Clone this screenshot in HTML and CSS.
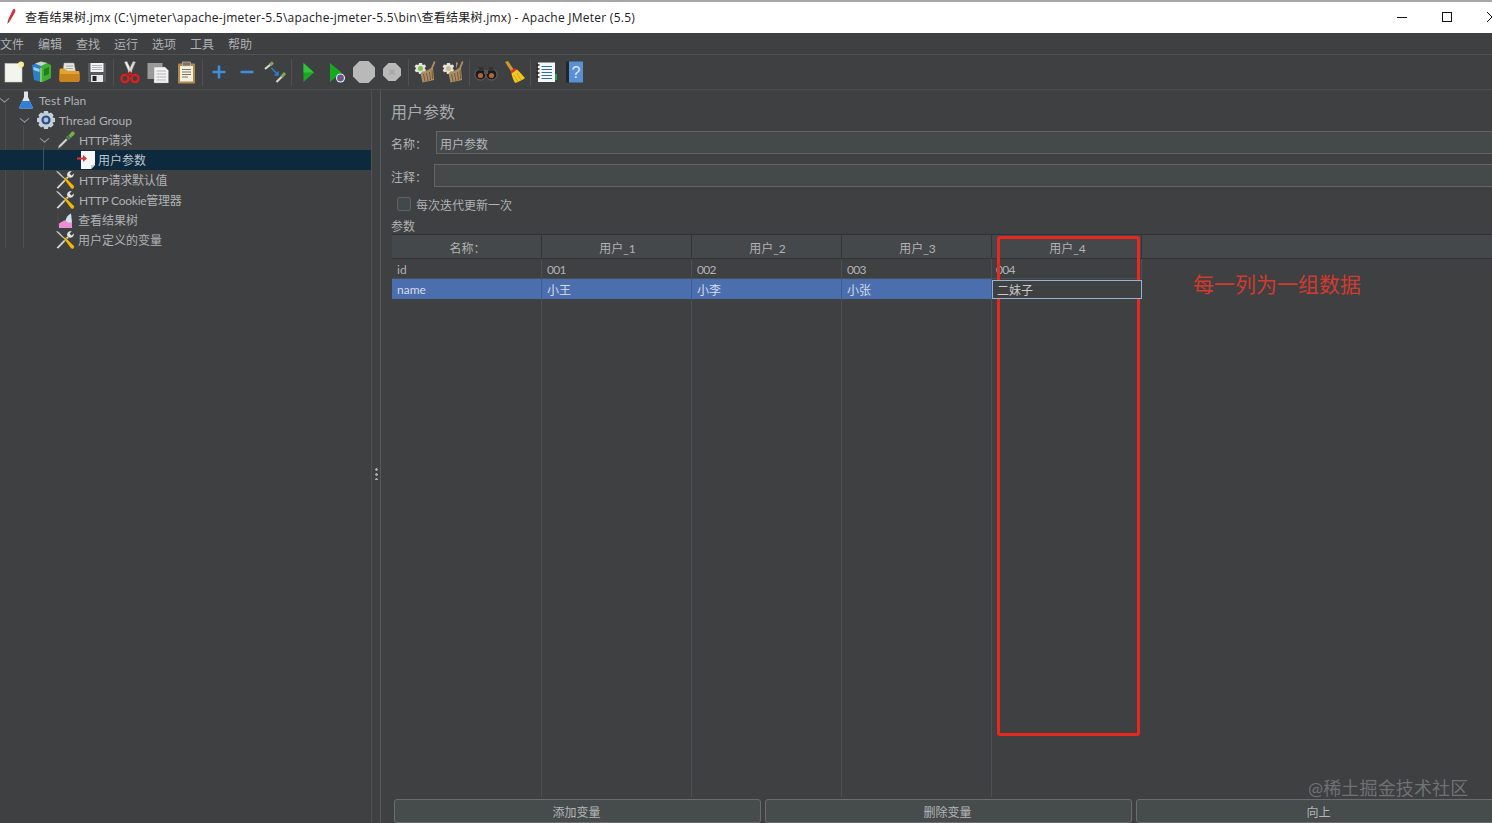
FILE: index.html
```html
<!DOCTYPE html>
<html lang="zh">
<head>
<meta charset="utf-8">
<title>查看结果树.jmx - Apache JMeter (5.5)</title>
<link rel="stylesheet" href="styles.css">
</head>
<body>
<svg class="defs" width="0" height="0" aria-hidden="true">
  <symbol id="tools" viewBox="0 0 20 20">
    <path d="M1.500 17.500 L3 19 L14.500 7 L13 5.500 Z" fill="#d8d8d8" stroke="#333" stroke-width=".4"/>
    <path d="M12 5.500 C11.500 2.500 14 .5 17 1 L14.800 3.600 L16.400 5.400 L19 3.200 C19.500 6 17 8.500 14.200 7.800 Z" fill="#e8e8e8" stroke="#444" stroke-width=".4"/>
    <path d="M1 1.500 L2 .7 L4.500 2.600 L9.500 7.800 L8.500 8.800 L3.200 3.800 Z" fill="#cfcfcf" stroke="#333" stroke-width=".4"/>
    <path d="M8.500 8.500 L10 7 L19 15.800 C19.600 16.600 19.400 17.600 18.600 18.400 C17.800 19.200 16.800 19.200 16 18.600 Z" fill="#f0b616" stroke="#3a3000" stroke-width=".4"/>
  </symbol>
  <symbol id="gearbrush" viewBox="0 0 24 24">
    <path d="M6 3 L9 3 L9.600 5 L12 4.600 L13 6.600 L11.600 8.200 L13 10 L12 12 L9.600 11.600 L9 14 L6 14 L5.400 11.800 L3 12.200 L1.600 10.200 L3.200 8.400 L1.600 6.600 L3 4.600 L5.400 5 Z" fill="#e4e4dc"/>
    <path d="M21 1 L22.500 2 L20 8 L21 20 L9.500 22.500 L7.500 13 L15 10 L18 8 Z" fill="#ad8d66"/>
    <path d="M10.500 14 L12 21.500 M13.500 13 L15 21 M16.500 12 L17.500 20 M19 10 L19.500 19" stroke="#6f5436" stroke-width=".9"/>
  </symbol>
</svg>

<header class="titlebar">
  <svg class="app-icon" width="12" height="18" viewBox="0 0 12 18"><path d="M9.500 1 C10.600 1.600 10.600 3 10 4.200 L5 13 L3 12 L7.600 2.200 C8 1.200 8.800 .8 9.500 1 Z" fill="#d6303a"/><path d="M3 12 L5 13 L2.400 16 Z" fill="#7a3a3a"/></svg>
  <span class="title-text">查看结果树.jmx (C:\jmeter\apache-jmeter-5.5\apache-jmeter-5.5\bin\查看结果树.jmx) - Apache JMeter (5.5)</span>
  <div class="win-controls">
    <span class="win-btn"><svg width="10" height="10" viewBox="0 0 10 10"><path d="M0 5.500H10" stroke="#111"/></svg></span>
    <span class="win-btn"><svg width="10" height="10" viewBox="0 0 10 10"><rect x=".5" y=".5" width="9" height="9" fill="none" stroke="#111"/></svg></span>
    <span class="win-btn"><svg width="10" height="10" viewBox="0 0 10 10"><path d="M0 0L10 10M10 0L0 10" stroke="#111"/></svg></span>
  </div>
</header>

<nav class="menubar">
  <span>文件</span><span>编辑</span><span>查找</span><span>运行</span><span>选项</span><span>工具</span><span>帮助</span>
</nav>

<div class="toolbar">
  <span class="tool"><svg width="24" height="24" viewBox="0 0 24 24"><rect x="4" y="3.500" width="17" height="18.500" fill="#f4f4ee" stroke="#c9c9c0" stroke-width=".6"/><circle cx="20" cy="4.500" r="3" fill="#f7ec9a"/></svg></span>
  <span class="tool"><svg width="24" height="24" viewBox="0 0 24 24"><path d="M3 5 L10 2.500 L12 5 L12 22 L5 20 Z" fill="#2a7fc8"/><path d="M12 5 L17 2.500 L22 5 L22 18 L14 22 L12 22 Z" fill="#3fae35"/><path d="M6 3.500 L12 1.500 L18 3 L12 6 Z" fill="#c8d8c8"/><path d="M4.500 7 L10.500 9 V12 L4.500 10 Z" fill="#9fd0f2"/><path d="M15 9 L20 7 V14 L15 16 Z" fill="#1f7f1f"/><path d="M11 8 H13 V22 H11 Z" fill="#85c65e"/></svg></span>
  <span class="tool"><svg width="24" height="24" viewBox="0 0 24 24"><path d="M7 3 H17 L18.500 11 H6 Z" fill="#e9e6dc" stroke="#999" stroke-width=".5"/><path d="M9 6H16M9 8.500H16" stroke="#a8a8a8"/><path d="M2.500 10 C2.500 9 3.200 8.500 4 8.500 H8 L10 11 H21 C22 11 22.500 11.600 22.500 12.500 V20 C22.500 21.200 21.700 22 20.500 22 H4.500 C3.200 22 2.500 21.200 2.500 20 Z" fill="#e5a22d"/><path d="M2.500 14 H22.500 V20 C22.500 21.200 21.700 22 20.500 22 H4.500 C3.200 22 2.500 21.200 2.500 20 Z" fill="#c9831d"/></svg></span>
  <span class="tool"><svg width="24" height="24" viewBox="0 0 24 24"><path d="M3 3 H21 V22 H3 Z" fill="#555a60"/><rect x="5.500" y="3" width="13" height="9" fill="#f3f3f3"/><path d="M7 5.500H17M7 7.500H17M7 9.500H17" stroke="#9aa6b2" stroke-width=".8"/><rect x="6" y="15" width="12" height="7" fill="#e8e8e8"/><rect x="7.500" y="16" width="4" height="5" fill="#222"/></svg></span>
  <span class="tool-sep"></span>
  <span class="tool"><svg width="24" height="24" viewBox="0 0 24 24"><path d="M6.500 2 L9 1.500 L14 12 L12 14.500 Z" fill="#f0f0f0" stroke="#999" stroke-width=".4"/><path d="M17.500 2 L15 1.500 L10 12 L12 14.500 Z" fill="#dcdcdc" stroke="#999" stroke-width=".4"/><circle cx="7" cy="18.500" r="3.600" fill="none" stroke="#d8201f" stroke-width="2.400"/><circle cx="17" cy="18.500" r="3.600" fill="none" stroke="#d8201f" stroke-width="2.400"/><path d="M9 15.500 L12 12.500 L15 15.500" fill="none" stroke="#c01818" stroke-width="2"/></svg></span>
  <span class="tool"><svg width="24" height="24" viewBox="0 0 24 24"><rect x="1.500" y="3" width="15" height="16" fill="#9a9a9a"/><path d="M8 7 H19 L22.500 10.500 V23 H8 Z" fill="#f2f2f2" stroke="#888" stroke-width=".4"/><path d="M10.500 11H20M10.500 14H20M10.500 17H20M10.500 20H20" stroke="#b4b4b4"/></svg></span>
  <span class="tool"><svg width="24" height="24" viewBox="0 0 24 24"><rect x="4" y="3.500" width="17" height="20" rx="1" fill="#b08a49"/><rect x="6" y="6" width="13" height="15.500" fill="#f4f0e0"/><rect x="8.500" y="2" width="8" height="4" fill="#807060" stroke="#d0c8b0" stroke-width=".6"/><path d="M8 9.500H17M8 12H17M8 14.500H17M8 17H14" stroke="#6a6a5a" stroke-width=".9"/></svg></span>
  <span class="tool-sep"></span>
  <span class="tool"><svg width="24" height="24" viewBox="0 0 24 24"><path d="M12 5.500V18.500M5.500 12H18.500" stroke="#3f8ed8" stroke-width="2.600"/></svg></span>
  <span class="tool"><svg width="24" height="24" viewBox="0 0 24 24"><path d="M5.500 12H18.500" stroke="#3f8ed8" stroke-width="2.600"/></svg></span>
  <span class="tool"><svg width="24" height="24" viewBox="0 0 24 24"><path d="M2 9 L7.500 4.500" stroke="#d8d8c8" stroke-width="2.200"/><path d="M7 5 L10 2.500" stroke="#7fa85a" stroke-width="3"/><path d="M13.500 22 L19 16.500" stroke="#d8d8c8" stroke-width="2.200"/><path d="M18.500 17 L22 13" stroke="#7fa85a" stroke-width="3"/><path d="M8.500 8 L15 15 M15 11.500V15H11.500" fill="none" stroke="#2f7fd0" stroke-width="1.500"/></svg></span>
  <span class="tool-sep"></span>
  <span class="tool"><svg width="24" height="24" viewBox="0 0 24 24"><path d="M7.500 3 L18 12.500 L7.500 22 Z" fill="#17a81f"/><path d="M7.500 3 L18 12.500 L7.500 12.500 Z" fill="#2fc43a"/></svg></span>
  <span class="tool"><svg width="24" height="24" viewBox="0 0 24 24"><path d="M6 3 L17.500 12.500 L6 22 Z" fill="#17a81f"/><circle cx="16.500" cy="18" r="4.500" fill="#f4f4f4"/><circle cx="16.500" cy="18" r="3.400" fill="#3768b8"/><path d="M14 20.500L19 15.500" stroke="#e03030" stroke-width="1.600"/></svg></span>
  <span class="tool"><svg width="24" height="24" viewBox="0 0 24 24"><path d="M7.500 1 H16.500 L23 7.500 V16.500 L16.500 23 H7.500 L1 16.500 V7.500 Z" fill="#b9b9b9"/></svg></span>
  <span class="tool"><svg width="24" height="24" viewBox="0 0 24 24"><path d="M8.500 3 H15.500 L21 8.500 V15.500 L15.500 21 H8.500 L3 15.500 V8.500 Z" fill="#b9b9b9"/><path d="M9.500 9.500L14.500 14.500M14.500 9.500L9.500 14.500" stroke="#a8a8a8" stroke-width="2"/></svg></span>
  <span class="tool-sep"></span>
  <span class="tool"><svg width="24" height="24" viewBox="0 0 24 24"><use href="#gearbrush"/><circle cx="7.500" cy="8.500" r="2.500" fill="#7fc04a"/></svg></span>
  <span class="tool"><svg width="24" height="24" viewBox="0 0 24 24"><use href="#gearbrush"/><path d="M15 2 L17 3 L15 9 Z" fill="#ad8d66"/><circle cx="7.500" cy="8.500" r="2.500" fill="#cdbb8a"/></svg></span>
  <span class="tool-sep"></span>
  <span class="tool"><svg width="24" height="24" viewBox="0 0 24 24"><circle cx="6.500" cy="14.500" r="5.500" fill="#1b1b1b" stroke="#777" stroke-width=".8"/><circle cx="17.500" cy="14.500" r="5.500" fill="#1b1b1b" stroke="#777" stroke-width=".8"/><circle cx="6.500" cy="15.500" r="2.600" fill="#b0623a"/><circle cx="17.500" cy="15.500" r="2.600" fill="#b0623a"/><rect x="4.500" y="7" width="5" height="4" fill="#333"/><rect x="14.500" y="7" width="5" height="4" fill="#333"/><rect x="10" y="10" width="4" height="4" fill="#555"/></svg></span>
  <span class="tool"><svg width="24" height="24" viewBox="0 0 24 24"><path d="M3 2 L6 1 L12 10 L9.500 12 Z" fill="#c89b30"/><path d="M8 11.500 L13 8 L15 10 L10 14 Z" fill="#d8302c"/><path d="M9.500 13.500 L15 9.500 C18 12 20 15 23 18 C20 20.500 16 22 13 23 C11.500 20 10 17 9.500 13.500 Z" fill="#f2c81e"/><path d="M12 15L16 22M15 13L19 20" stroke="#c89a10" stroke-width=".8"/></svg></span>
  <span class="tool-sep tool-sep-narrow"></span>
  <span class="tool"><svg width="24" height="24" viewBox="0 0 24 24"><rect x="4" y="2.500" width="17" height="19.500" fill="#f6f6f6"/><path d="M7.500 6.500H18M7.500 9.500H18M7.500 12.500H18M7.500 15.500H18M7.500 18.500H18" stroke="#2c6fa8" stroke-width="1.200"/><path d="M2.500 5H5.500M2.500 9H5.500M2.500 13H5.500M2.500 17H5.500" stroke="#222" stroke-width="1.500"/><rect x="21" y="14" width="2" height="6" fill="#2f9a4a"/></svg></span>
  <span class="tool"><svg width="24" height="24" viewBox="0 0 24 24"><rect x="4" y="1.500" width="4" height="21" fill="#20262b"/><rect x="7" y="1.500" width="14" height="21" fill="#5a8fd6"/><text class="help-q" x="14" y="17.500">?</text></svg></span>
</div>

<main class="workspace">
  <aside class="tree">
    <span class="guide guide-a"></span>
    <span class="guide guide-b"></span>
    <span class="guide guide-c"></span>
    <div class="row lvl0">
      <span class="arrow"></span>
      <svg class="ticon" width="20" height="20" viewBox="0 0 20 20"><path d="M8 1.500 H12 V7 L16.500 17 C17 18 16.500 18.500 15.500 18.500 H4.500 C3.500 18.500 3 18 3.500 17 L8 7 Z" fill="#dfe6ea"/><path d="M6 11 H14 L16.500 17 C17 18 16.500 18.500 15.500 18.500 H4.500 C3.500 18.500 3 18 3.500 17 Z" fill="#2f7fd8"/></svg>
      <span class="label">Test Plan</span>
    </div>
    <div class="row lvl1">
      <span class="arrow"></span>
      <svg class="ticon" width="20" height="20" viewBox="0 0 20 20"><path d="M8 1 H12 L12.600 3.400 L15 2.400 L17.600 5 L16.600 7.400 L19 8 V12 L16.600 12.600 L17.600 15 L15 17.600 L12.600 16.600 L12 19 H8 L7.400 16.600 L5 17.600 L2.400 15 L3.400 12.600 L1 12 V8 L3.400 7.400 L2.400 5 L5 2.400 L7.400 3.400 Z" fill="#c6ced6"/><circle cx="10" cy="10" r="4.600" fill="#2a4f86"/><circle cx="10" cy="10" r="2.400" fill="#a9c0df"/></svg>
      <span class="label">Thread Group</span>
    </div>
    <div class="row lvl2">
      <span class="arrow"></span>
      <svg class="ticon" width="20" height="20" viewBox="0 0 20 20"><path d="M2 18.500 L3 15.500 L10 8.500 L11.500 10 L4.500 17 Z" fill="#d8d8d8" stroke="#777" stroke-width=".4"/><path d="M10 7 L13 10 L14.500 8.500 L11.500 5.500 Z" fill="#4f8f3a"/><path d="M12.500 5.500 L15.500 2 C16.500 1.200 18 1.500 18.500 2.500 C19 3.500 18.500 4.500 18 5 L14.500 8 Z" fill="#74ad4a"/></svg>
      <span class="label label-cjk label-mixed">HTTP请求</span>
    </div>
    <div class="row lvl3 selected">
      <svg class="ticon" width="20" height="20" viewBox="0 0 20 20"><path d="M4 1 H18 V15 L14 19 H4 Z" fill="#f7f7f7"/><path d="M18 15 L14 15 L14 19 Z" fill="#c9c9c9"/><path d="M0 8.500H7" stroke="#d8343a" stroke-width="2"/><path d="M6 5 L10 8.500 L6 12 Z" fill="#d8343a"/></svg>
      <span class="label label-cjk">用户参数</span>
    </div>
    <div class="row leaf">
      <svg class="ticon" width="20" height="20"><use href="#tools"/></svg>
      <span class="label label-cjk label-mixed">HTTP请求默认值</span>
    </div>
    <div class="row leaf">
      <svg class="ticon" width="20" height="20"><use href="#tools"/></svg>
      <span class="label label-cjk label-mixed">HTTP Cookie管理器</span>
    </div>
    <div class="row leaf tight">
      <svg class="ticon" width="20" height="20" viewBox="0 0 20 20"><path d="M3 3V18.500" stroke="#555" stroke-width=".6"/><path d="M4 18 V13.500 L9 10.500 L12 10.500 L17 12 V18 Z" fill="#e98fd5"/><path d="M10.500 11 C11 7.500 13 5 16 3.500 L17 12 L14 13 Z" fill="#cfe0ee"/></svg>
      <span class="label label-cjk">查看结果树</span>
    </div>
    <div class="row leaf tight">
      <svg class="ticon" width="20" height="20"><use href="#tools"/></svg>
      <span class="label label-cjk">用户定义的变量</span>
    </div>
  </aside>

  <div class="splitter"><span class="grip"></span></div>

  <section class="panel">
    <h1 class="panel-title">用户参数</h1>
    <div class="field field-name">
      <label class="field-label">名称：</label>
      <div class="input">用户参数</div>
    </div>
    <div class="field field-comment">
      <label class="field-label">注释：</label>
      <div class="input"></div>
    </div>
    <div class="check-row">
      <span class="checkbox"></span>
      <span class="check-text">每次迭代更新一次</span>
    </div>
    <div class="group-label">参数</div>
    <div class="table">
      <div class="th">名称：</div><div class="th">用户_1</div><div class="th">用户_2</div><div class="th">用户_3</div><div class="th">用户_4</div><div class="th th-end"></div>
      <div class="td">id</div><div class="td num">001</div><div class="td num">002</div><div class="td num">003</div><div class="td clipped num">004</div><div class="td td-end"></div>
      <div class="td sel sel-latin">name</div><div class="td sel">小王</div><div class="td sel">小李</div><div class="td sel">小张</div><div class="td editing">二妹子</div><div class="td td-end"></div>
      <div class="fill"></div><div class="fill"></div><div class="fill"></div><div class="fill"></div><div class="fill fill-end"></div><div class="fill fill-end"></div>
    </div>
    <div class="actions">
      <button class="btn">添加变量</button>
      <button class="btn">删除变量</button>
      <button class="btn">向上</button>
    </div>
  </section>
</main>

<div class="mark-rect"></div>
<div class="mark-text">每一列为一组数据</div>
<div class="watermark">@稀土掘金技术社区</div>
</body>
</html>
```

FILE: styles.css
```css
* { box-sizing: border-box; }
html, body { margin: 0; height: 100%; }
body {
  position: relative;
  width: 1492px;
  height: 823px;
  overflow: hidden;
  display: flex;
  flex-direction: column;
  background: #3e4042;
  color: #b0b2b4;
  font: 12px/1.2 "Lato", "Noto Sans CJK SC", sans-serif;
}
.defs { position: absolute; }

.titlebar {
  flex: 0 0 33px;
  display: flex;
  align-items: center;
  padding: 2px 0 0 5px;
  background: #fff;
  border-top: 2px solid #a6a6a6;
  color: #222;
  overflow: hidden;
}
.app-icon { flex: none; margin-top: -4px; }
.title-text { margin: -2px 0 0 8px; white-space: nowrap; font: 12px/14px "Open Sans", "Noto Sans CJK SC", sans-serif; letter-spacing: .25px; }
.win-controls { margin-left: auto; margin-right: -22px; display: flex; }
.win-btn { width: 45px; height: 20px; display: flex; align-items: center; justify-content: center; margin-top: -3px; }

.menubar {
  flex: 0 0 22px;
  display: flex;
  gap: 14px;
  align-items: center;
  border-bottom: 1px solid #515151;
  padding-top: 3px;
}

.toolbar {
  flex: 0 0 35px;
  display: flex;
  align-items: center;
  margin-left: -1px;
  border-bottom: 1px solid #4a4c4e;
}
.tool { flex: 0 0 28px; height: 24px; display: flex; justify-content: center; }
.tool-sep { flex: 0 0 5px; height: 27px; background: linear-gradient(#515151, #515151) center / 1px 100% no-repeat; }
.tool-sep-narrow { flex-basis: 4px; }
.help-q { fill: #dfe9f6; font: 16px "Liberation Sans", sans-serif; text-anchor: middle; }

.workspace { flex: 1; min-height: 0; display: flex; }

.tree { position: relative; flex: 0 0 371px; }
.guide { position: absolute; width: 1px; background: #4c4e50; }
.guide-a { left: 5px; top: 14px; height: 144px; }
.guide-b { left: 23px; top: 36px; height: 122px; }
.guide-c { left: 43px; top: 56px; height: 24px; background: #3d5266; z-index: 1; }
.row { position: relative; height: 20px; display: flex; align-items: center; white-space: nowrap; }
.row.lvl0 { padding-left: 0; }
.row.lvl1 { padding-left: 20px; }
.row.lvl2 { padding-left: 40px; }
.row.lvl3 { padding-left: 77px; }
.row.leaf { padding-left: 55px; }
.row.selected { background: #0d293e; color: #bcc4cc; }
.arrow {
  flex: none;
  width: 7px;
  height: 7px;
  margin: -3px 8px 0 1px;
  border-right: 1.5px solid #9a9c9e;
  border-bottom: 1.5px solid #9a9c9e;
  transform: scale(1, .85) rotate(45deg);
}
.ticon { flex: none; }
.label { margin-left: 3px; padding-top: 2px; }
.label-cjk { padding-top: 3px; }
.label-mixed { letter-spacing: -.25px; }
.row.leaf .label { margin-left: 4px; }
.row.lvl3 .label { margin-left: 1px; }
.row.leaf.tight .label { margin-left: 3px; }

.splitter {
  position: relative;
  flex: 0 0 10px;
  border-left: 1px solid #4f5153;
  border-right: 1px solid #56585a;
  display: flex;
  align-items: center;
  justify-content: center;
}
.grip { width: 3px; height: 13px; margin-top: 34px; background: radial-gradient(circle, #aaa 1.2px, transparent 1.5px) center top / 3px 5px repeat-y; }

.panel { flex: 1; min-width: 0; display: flex; flex-direction: column; padding: 0 0 0 10px; overflow: hidden; }
.panel-title { margin: 11px 0 0 0; font-size: 16px; font-weight: 400; line-height: 22px; color: #a9abad; height: 22px; }
.field { display: flex; align-items: center; height: 23px; margin-right: -3px; }
.field-name { margin-top: 8px; }
.field-comment { margin-top: 10px; }
.field-label { flex: none; width: 45px; padding-top: 6px; }
.field-comment .field-label { width: 43px; }
.input {
  flex: 1;
  height: 23px;
  line-height: 23px;
  padding: 1px 0 0 3px;
  background: #45494a;
  border: 1px solid #646464;
  color: #b4b6b8;
}
.check-row { display: flex; align-items: center; gap: 5px; margin: 10px 0 0 6px; height: 14px; }
.check-text { padding-top: 4px; }
.checkbox { width: 14px; height: 14px; background: #43494a; border: 1px solid #5f6264; border-radius: 2px; }
.group-label { margin-top: 7px; height: 16px; line-height: 18px; }

.table {
  flex: 1;
  min-height: 0;
  margin: 0 0 0 1px;
  display: grid;
  grid-template-columns: repeat(5, 150px) 1fr;
  grid-template-rows: 24px 20px 20px 1fr;
  border-top: 1px solid #323232;
}
.th {
  display: flex;
  align-items: center;
  justify-content: center;
  padding: 6px 0 0 2px;
  background: #45484a;
  border-right: 1px solid #323436;
  border-bottom: 1px solid #323436;
}
.th-end { border-right: 0; }
.td {
  display: flex;
  align-items: center;
  padding: 3px 0 0 5px;
  border-right: 1px solid #4d5052;
  border-bottom: 1px solid #4d5052;
  white-space: nowrap;
  overflow: hidden;
}
.td-end { border: 0; }
.num { letter-spacing: -.7px; }
.clipped { padding-left: 0; text-indent: 4px; }
.sel { background: #4b6eaf; color: #d6dce8; border-right-color: #3d5c96; border-bottom: 0; padding-top: 4px; }
.sel-latin { padding-top: 2px; }
.editing { position: relative; z-index: 1; background: #3e4042; border: 1px solid #98b0d4; width: 150px; height: 19px; margin-top: 1px; padding: 4px 0 0 4px; color: #c8c8c8; }
.fill { border-right: 1px solid #4d5052; }
.fill-end { border-right: 0; }

.actions {
  flex: 0 0 24px;
  min-height: 0;
  margin: 2px 0 0 3px;
  display: grid;
  grid-template-columns: repeat(3, 367px);
  gap: 4px;
}
.btn {
  height: 24px;
  padding: 5px 2px 0 0;
  font: inherit;
  color: #b4b6b8;
  background: #464c4b;
  border: 1px solid #6a6d6e;
  border-radius: 3px;
}

.mark-rect {
  position: absolute;
  left: 997px;
  top: 236px;
  width: 143px;
  height: 500px;
  border: 3px solid #e8281f;
  border-radius: 3px;
}
.mark-text {
  position: absolute;
  left: 1193px;
  top: 270px;
  font-size: 21px;
  line-height: 28px;
  color: #d23a2e;
  white-space: nowrap;
}
.watermark {
  position: absolute;
  left: 1308px;
  top: 776px;
  font-size: 18px;
  letter-spacing: .15px;
  line-height: 24px;
  color: #6f7173;
  white-space: nowrap;
}
```
